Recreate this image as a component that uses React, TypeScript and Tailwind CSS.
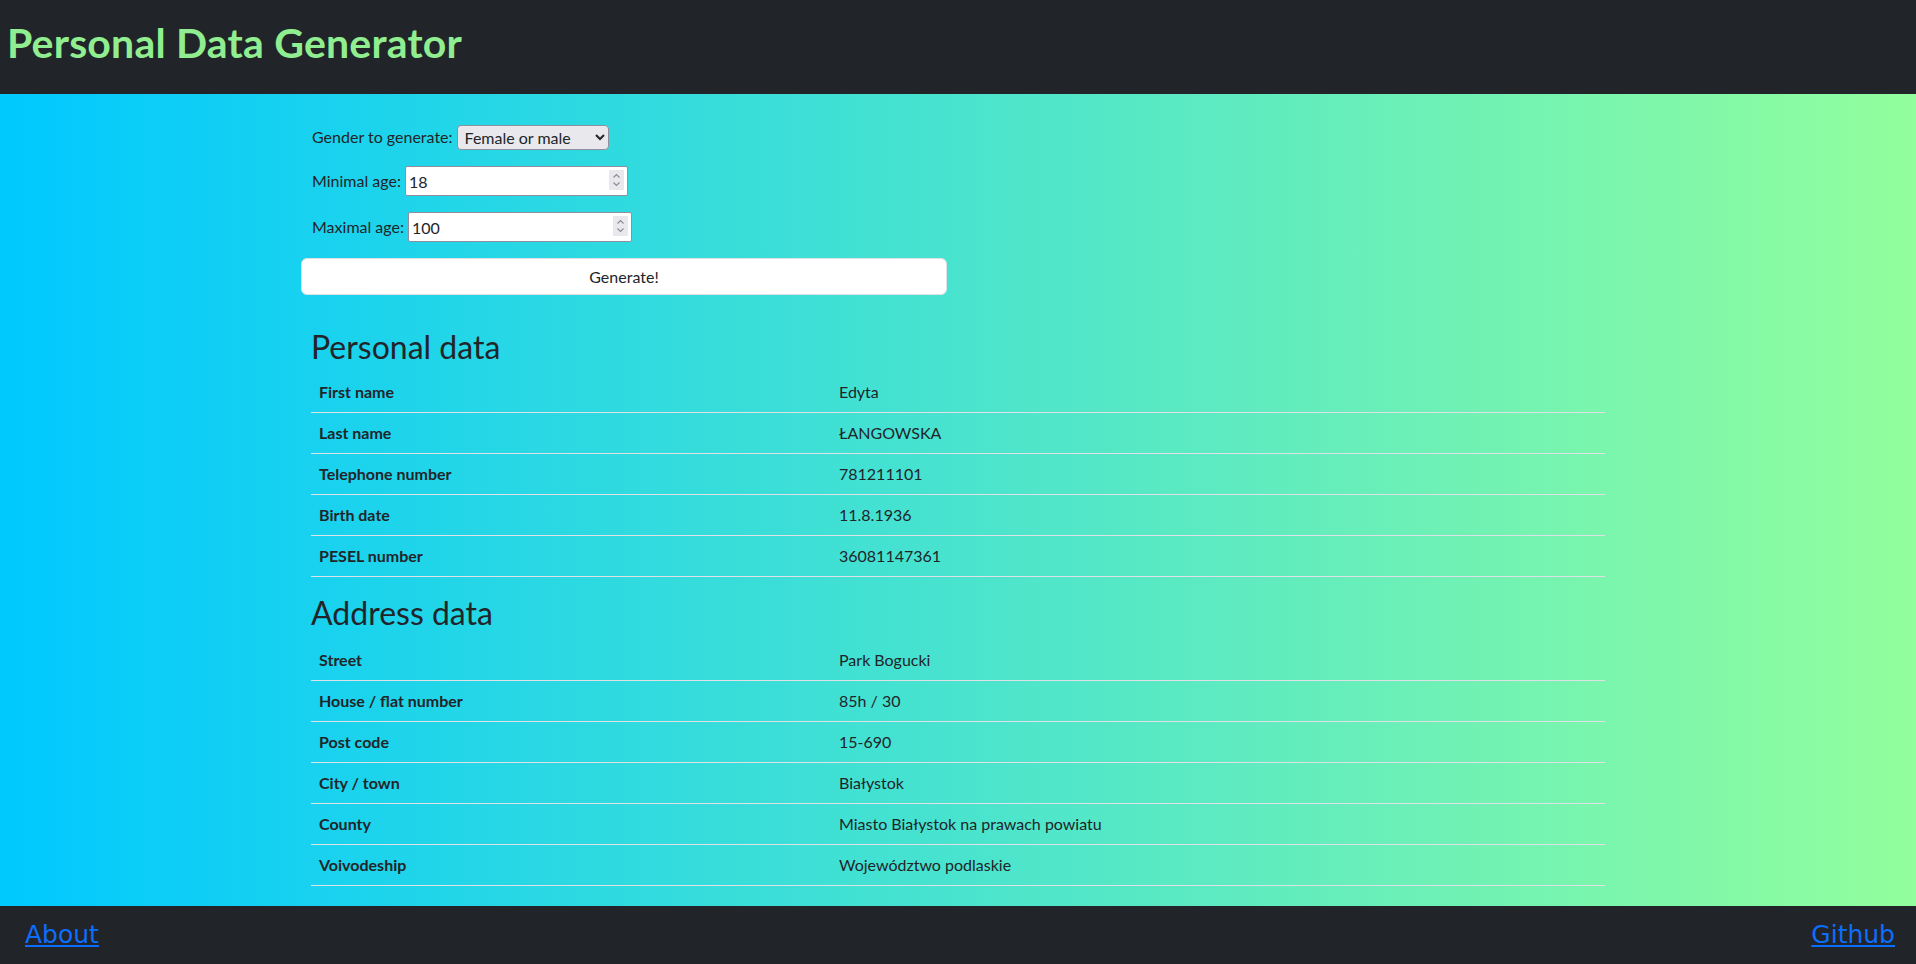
const personal = [
  ['First name', 'Edyta'],
  ['Last name', 'ŁANGOWSKA'],
  ['Telephone number', '781211101'],
  ['Birth date', '11.8.1936'],
  ['PESEL number', '36081147361'],
]

const address = [
  ['Street', 'Park Bogucki'],
  ['House / flat number', '85h / 30'],
  ['Post code', '15-690'],
  ['City / town', 'Białystok'],
  ['County', 'Miasto Białystok na prawach powiatu'],
  ['Voivodeship', 'Województwo podlaskie'],
]

function DataTable({ rows }: { rows: string[][] }) {
  return (
    <table className="w-full border-collapse">
      <tbody>
        {rows.map(([label, value]) => (
          <tr key={label} className="border-b border-[#dee2e6]">
            <th className="w-[520px] p-2 text-left font-bold leading-6">{label}</th>
            <td className="p-2 leading-6">{value}</td>
          </tr>
        ))}
      </tbody>
    </table>
  )
}

function NumberField({ value, width }: { value: number; width: string }) {
  return (
    <div className={`relative h-[30px] ${width}`}>
      <input
        type="number"
        defaultValue={value}
        className="h-full w-full bg-white border border-[#8f8f9d] rounded-[2px] pl-[3px] pr-6 [appearance:textfield] [&::-webkit-inner-spin-button]:appearance-none [&::-webkit-outer-spin-button]:appearance-none"
      />
      {/* gtk style spinner */}
      <div className="absolute right-[4px] top-[4px] h-[20px] w-[15px] bg-[#e9e9ed] flex flex-col items-center justify-center pointer-events-none">
        <svg width="9" height="16" viewBox="0 0 9 16" fill="none" stroke="#8a8a92" strokeWidth="1.1">
          <path d="M1.5 5.5 4.5 2.5 7.5 5.5" />
          <path d="M1.5 10.5 4.5 13.5 7.5 10.5" />
        </svg>
      </div>
    </div>
  )
}

export default function App() {
  return (
    <div
      className="h-screen flex flex-col text-[#212529] text-base"
      style={{ fontFamily: 'Lato, "Noto Sans", sans-serif' }}
    >
      <header className="h-[94px] shrink-0 bg-[#212529] flex items-center px-[7px] pb-[9px]">
        <h1 className="text-[41px] font-bold text-[#90ee90] leading-none tracking-[0.2px]">Personal Data Generator</h1>
      </header>

      <main className="flex-1 bg-[linear-gradient(90deg,#00c9ff,#92fe9d)]">
        <div className="w-[1320px] mx-auto pt-[28px]">
          <div className="pl-[14px]">
            <div className="h-[30px] flex items-center gap-1">
              <label>Gender to generate:</label>
              <select className="h-[25px] w-[152px] bg-[#e9e9ed] border border-[#8f8f9d] rounded-[4px] px-[3px] text-base">
                <option>Female or male</option>
                <option>Female</option>
                <option>Male</option>
              </select>
            </div>
            <div className="h-[30px] mt-[14px] flex items-center gap-1">
              <label>Minimal age:</label>
              <NumberField value={18} width="w-[223px]" />
            </div>
            <div className="h-[30px] mt-[16px] flex items-center gap-1">
              <label>Maximal age:</label>
              <NumberField value={100} width="w-[224px]" />
            </div>
          </div>
          <button className="mt-[16px] ml-[3px] w-[646px] h-[37px] bg-white border border-[#dee2e6] rounded-[6px] text-center">
            Generate!
          </button>

          <section className="px-[13px] mt-[35px]">
            <h3 className="text-[32px] font-normal leading-[1.05] mb-2">Personal data</h3>
            <DataTable rows={personal} />
            <h3 className="text-[32px] font-normal leading-[1.05] mt-[19px] mb-[11px]">Address data</h3>
            <DataTable rows={address} />
          </section>
        </div>
      </main>

      <footer
        className="h-[58px] shrink-0 bg-[#212529] flex items-center justify-between pl-[25px] pr-[21px] text-[25px]"
        style={{ fontFamily: '"DejaVu Sans", sans-serif' }}
      >
        <a href="#" className="text-[#0d6efd] underline">About</a>
        <a href="#" className="text-[#0d6efd] underline">Github</a>
      </footer>
    </div>
  )
}
